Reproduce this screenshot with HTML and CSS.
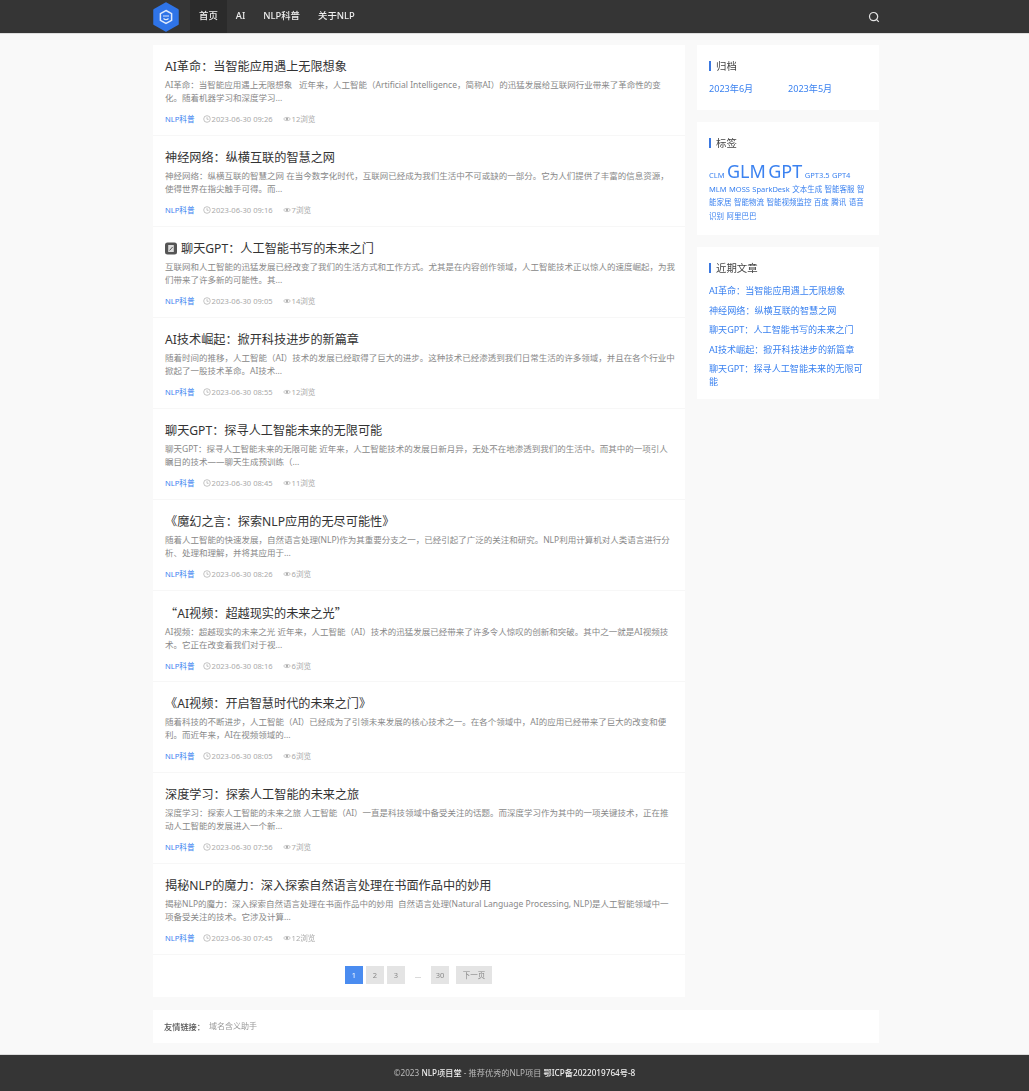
FILE: index.html
```html
<!DOCTYPE html>
<html lang="zh-CN">
<head>
  <meta charset="UTF-8" />
  <meta name="viewport" content="width=device-width, initial-scale=1.0"/>
  <title>NLP项目堂</title>
  <link rel="stylesheet" href="styles.css">
</head>
<body>

<!-- meta icons -->
<svg class="defs" width="0" height="0">
  <symbol id="i-clock" viewBox="0 0 8 8">
    <circle cx="4" cy="4" r="3.3" fill="none" stroke="currentColor" stroke-width=".7"/>
    <path d="M4 2.2 V4.3 H5.6" fill="none" stroke="currentColor" stroke-width=".7"/>
  </symbol>
  <symbol id="i-eye" viewBox="0 0 9 8">
    <path d="M.5 4 C2 1.6 7 1.6 8.5 4 C7 6.4 2 6.4 .5 4 Z" fill="none" stroke="currentColor" stroke-width=".7"/>
    <circle cx="4.5" cy="4" r="1.3" fill="currentColor"/>
  </symbol>
</svg>

<header class="top-bar">
  <div class="wrap top-inner">
    <a href="#" class="logo">
      <svg width="26" height="30" viewBox="0 0 26 30">
        <path d="M13 1.5 L24.5 8 V22 L13 28.5 L1.5 22 V8 Z" fill="#2f74e8" stroke="#2f74e8" stroke-width="2.5" stroke-linejoin="round"/>
        <path d="M13 8.5 L18.6 11.7 V18.3 L13 21.5 L7.4 18.3 V11.7 Z" fill="none" stroke="#dfeafc" stroke-width="1.5"/>
        <path d="M10 14 H16 M10.5 16.5 Q13 18.6 15.5 16.5" fill="none" stroke="#dfeafc" stroke-width="1.2"/>
      </svg>
    </a>
    <nav class="nav">
      <a href="#" class="active">首页</a>
      <a href="#">AI</a>
      <a href="#">NLP科普</a>
      <a href="#">关于NLP</a>
    </nav>
    <svg class="search" width="12" height="12" viewBox="0 0 12 12">
      <circle cx="5.6" cy="5.6" r="4.1" fill="none" stroke="#e4e4e4" stroke-width="1.2"/>
      <path d="M8.6 8.6 L10.8 10.8" stroke="#e4e4e4" stroke-width="1.2"/>
    </svg>
  </div>
</header>

<div class="wrap page">
  <main class="main-col">
    <article class="post">
      <h2>AI革命：当智能应用遇上无限想象</h2>
      <p>AI革命：当智能应用遇上无限想象&nbsp;&nbsp; 近年来，人工智能（Artificial Intelligence，简称AI）的迅猛发展给互联网行业带来了革命性的变化。随着机器学习和深度学习...</p>
      <div class="meta"><a href="#">NLP科普</a><span><svg><use href="#i-clock"/></svg>2023-06-30 09:26</span><span><svg><use href="#i-eye"/></svg>12浏览</span></div>
    </article>
    <article class="post">
      <h2>神经网络：纵横互联的智慧之网</h2>
      <p>神经网络：纵横互联的智慧之网 在当今数字化时代，互联网已经成为我们生活中不可或缺的一部分。它为人们提供了丰富的信息资源，使得世界在指尖触手可得。而...</p>
      <div class="meta"><a href="#">NLP科普</a><span><svg><use href="#i-clock"/></svg>2023-06-30 09:16</span><span><svg><use href="#i-eye"/></svg>7浏览</span></div>
    </article>
    <article class="post">
      <h2><svg class="title-icon" width="12" height="13" viewBox="0 0 12 13">
          <rect x="0" y="0.5" width="12" height="12" rx="2.5" fill="#555"/>
          <path d="M3.2 3 H8.8 V10 H3.2 Z" fill="#ddd"/>
          <path d="M4.6 8.4 L7.6 5" stroke="#555" stroke-width="1"/>
        </svg>聊天GPT：人工智能书写的未来之门</h2>
      <p>互联网和人工智能的迅猛发展已经改变了我们的生活方式和工作方式。尤其是在内容创作领域，人工智能技术正以惊人的速度崛起，为我们带来了许多新的可能性。其...</p>
      <div class="meta"><a href="#">NLP科普</a><span><svg><use href="#i-clock"/></svg>2023-06-30 09:05</span><span><svg><use href="#i-eye"/></svg>14浏览</span></div>
    </article>
    <article class="post">
      <h2>AI技术崛起：掀开科技进步的新篇章</h2>
      <p>随着时间的推移，人工智能（AI）技术的发展已经取得了巨大的进步。这种技术已经渗透到我们日常生活的许多领域，并且在各个行业中掀起了一股技术革命。AI技术...</p>
      <div class="meta"><a href="#">NLP科普</a><span><svg><use href="#i-clock"/></svg>2023-06-30 08:55</span><span><svg><use href="#i-eye"/></svg>12浏览</span></div>
    </article>
    <article class="post">
      <h2>聊天GPT：探寻人工智能未来的无限可能</h2>
      <p>聊天GPT：探寻人工智能未来的无限可能 近年来，人工智能技术的发展日新月异，无处不在地渗透到我们的生活中。而其中的一项引人瞩目的技术——聊天生成预训练（...</p>
      <div class="meta"><a href="#">NLP科普</a><span><svg><use href="#i-clock"/></svg>2023-06-30 08:45</span><span><svg><use href="#i-eye"/></svg>11浏览</span></div>
    </article>
    <article class="post">
      <h2>《魔幻之言：探索NLP应用的无尽可能性》</h2>
      <p>随着人工智能的快速发展，自然语言处理(NLP)作为其重要分支之一，已经引起了广泛的关注和研究。NLP利用计算机对人类语言进行分析、处理和理解，并将其应用于...</p>
      <div class="meta"><a href="#">NLP科普</a><span><svg><use href="#i-clock"/></svg>2023-06-30 08:26</span><span><svg><use href="#i-eye"/></svg>6浏览</span></div>
    </article>
    <article class="post">
      <h2><span class="cjk-quote">“</span>AI视频：超越现实的未来之光<span class="cjk-quote">”</span></h2>
      <p>AI视频：超越现实的未来之光 近年来，人工智能（AI）技术的迅猛发展已经带来了许多令人惊叹的创新和突破。其中之一就是AI视频技术。它正在改变着我们对于视...</p>
      <div class="meta"><a href="#">NLP科普</a><span><svg><use href="#i-clock"/></svg>2023-06-30 08:16</span><span><svg><use href="#i-eye"/></svg>6浏览</span></div>
    </article>
    <article class="post">
      <h2>《AI视频：开启智慧时代的未来之门》</h2>
      <p>随着科技的不断进步，人工智能（AI）已经成为了引领未来发展的核心技术之一。在各个领域中，AI的应用已经带来了巨大的改变和便利。而近年来，AI在视频领域的...</p>
      <div class="meta"><a href="#">NLP科普</a><span><svg><use href="#i-clock"/></svg>2023-06-30 08:05</span><span><svg><use href="#i-eye"/></svg>6浏览</span></div>
    </article>
    <article class="post">
      <h2>深度学习：探索人工智能的未来之旅</h2>
      <p>深度学习：探索人工智能的未来之旅 人工智能（AI）一直是科技领域中备受关注的话题。而深度学习作为其中的一项关键技术，正在推动人工智能的发展进入一个新...</p>
      <div class="meta"><a href="#">NLP科普</a><span><svg><use href="#i-clock"/></svg>2023-06-30 07:56</span><span><svg><use href="#i-eye"/></svg>7浏览</span></div>
    </article>
    <article class="post">
      <h2>揭秘NLP的魔力：深入探索自然语言处理在书面作品中的妙用</h2>
      <p>揭秘NLP的魔力：深入探索自然语言处理在书面作品中的妙用&nbsp; 自然语言处理(Natural Language Processing, NLP)是人工智能领域中一项备受关注的技术。它涉及计算...</p>
      <div class="meta"><a href="#">NLP科普</a><span><svg><use href="#i-clock"/></svg>2023-06-30 07:45</span><span><svg><use href="#i-eye"/></svg>12浏览</span></div>
    </article>

    <div class="pager">
      <a href="#" class="num current">1</a>
      <a href="#" class="num">2</a>
      <a href="#" class="num">3</a>
      <span class="dots">...</span>
      <a href="#" class="num">30</a>
      <a href="#" class="next">下一页</a>
    </div>
  </main>

  <aside class="side-col">
    <section class="widget">
      <h3>归档</h3>
      <div class="archive">
        <a href="#">2023年6月</a>
        <a href="#">2023年5月</a>
      </div>
    </section>
    <section class="widget">
      <h3>标签</h3>
      <div class="tags">
        <a href="#">CLM</a> <a href="#" class="big">GLM</a> <a href="#" class="big">GPT</a> <a href="#">GPT3.5</a> <a href="#">GPT4</a> <a href="#">MLM</a> <a href="#">MOSS</a> <a href="#">SparkDesk</a> <a href="#">文本生成</a> <a href="#">智能客服</a> <a href="#">智能家居</a> <a href="#">智能物流</a> <a href="#">智能视频监控</a> <a href="#">百度</a> <a href="#">腾讯</a> <a href="#">语音识别</a> <a href="#">阿里巴巴</a>
      </div>
    </section>
    <section class="widget">
      <h3>近期文章</h3>
      <ul class="recent">
        <li><a href="#">AI革命：当智能应用遇上无限想象</a></li>
        <li><a href="#">神经网络：纵横互联的智慧之网</a></li>
        <li><a href="#">聊天GPT：人工智能书写的未来之门</a></li>
        <li><a href="#">AI技术崛起：掀开科技进步的新篇章</a></li>
        <li><a href="#">聊天GPT：探寻人工智能未来的无限可能</a></li>
      </ul>
    </section>
  </aside>

  <div class="friend-links">
    <b>友情链接：</b><a href="#">域名含义助手</a>
  </div>
</div>

<footer class="site-footer">
  ©2023 <b>NLP项目堂</b> - 推荐优秀的NLP项目 <b>鄂ICP备2022019764号-8</b>
</footer>

</body>
</html>
```

FILE: styles.css
```css
* {
  box-sizing: border-box;
}

body {
  margin: 0;
  font-family: "Noto Sans", "Noto Sans CJK SC", sans-serif;
  background-color: #f9f9f9;
  color: #333;
  filter: blur(0.4px);
}

a {
  text-decoration: none;
  color: inherit;
}

.defs {
  position: absolute;
}

.wrap {
  width: 726px;
  margin: 0 150px 0 153px;
}

.top-bar {
  height: 34px;
  background-color: #353535;
  border-bottom: 1px solid #ddd;
}

.top-inner {
  height: 33px;
  display: flex;
  align-items: center;
}

.logo {
  display: flex;
  margin-right: 11px;
}

.nav {
  display: flex;
  height: 33px;
}

.nav a {
  padding: 0 9px;
  line-height: 32px;
  font-size: 9.4px;
  font-weight: 500;
  color: #eee;
}

.nav a.active {
  background-color: #2b2b2b;
}

.search {
  margin-left: auto;
  margin-right: -1px;
}

.page {
  display: grid;
  grid-template-columns: 532px 182px;
  column-gap: 12px;
  align-items: start;
  padding-top: 11px;
}

.main-col {
  background: #fff;
}

.post {
  height: 91px;
  padding: 12.5px 9.5px 0 12px;
  border-bottom: 1px solid #f7f7f7;
}

.post h2 {
  margin: 0;
  font-size: 12.15px;
  line-height: 18px;
  font-weight: 400;
  color: #333;
}

.title-icon {
  margin-right: 4px;
  vertical-align: -2px;
}

.cjk-quote {
  font-family: "Noto Sans CJK SC", sans-serif;
}

.post p {
  margin: 2.5px 0 0;
  font-size: 8.5px;
  line-height: 13px;
  color: #888;
}

.meta {
  margin-top: 8.5px;
  display: flex;
  gap: 8px;
  font-size: 7.6px;
  line-height: 12px;
  color: #aaa;
}

.meta a {
  color: #3b82f0;
}

.meta span {
  display: flex;
  align-items: center;
}

.meta span + span {
  margin-left: 2px;
}

.meta svg {
  width: 8px;
  height: 8px;
  margin-right: 1px;
}

.pager {
  height: 42px;
  padding: 11px 1px 0 0;
  display: flex;
  justify-content: center;
  gap: 3px;
  font-size: 7.5px;
}

.pager a {
  height: 18px;
  line-height: 18px;
  text-align: center;
  background-color: #e4e4e4;
  color: #888;
}

.pager .num {
  width: 18px;
}

.pager .next {
  width: 36px;
  margin-left: 4px;
}

.pager .current {
  background-color: #4a8cf0;
  color: #fff;
}

.pager .dots {
  width: 20px;
  line-height: 18px;
  text-align: center;
  color: #aaa;
}

.side-col {
  display: flex;
  flex-direction: column;
  gap: 12px;
}

.widget {
  background: #fff;
  padding: 16px 12px 12px;
}

.widget h3 {
  margin: 0;
  padding-left: 5px;
  border-left: 2.5px solid #3b78e0;
  font-size: 10.4px;
  line-height: 10px;
  font-weight: 400;
  color: #444;
}

.archive {
  margin-top: 11px;
  margin-bottom: 2px;
  display: grid;
  grid-template-columns: 79px 79px;
  font-size: 9.1px;
  line-height: 14px;
  color: #3b82f0;
}

.tags {
  margin-top: 12px;
  font-size: 7.5px;
  line-height: 13.5px;
  color: #3b82f0;
}

.tags a {
  margin-right: 0.5px;
}

.tags .big {
  font-size: 18px;
  line-height: 22px;
}

.recent {
  margin: 11px 0 -1px;
  padding: 0;
  list-style: none;
  display: flex;
  flex-direction: column;
  gap: 6.5px;
  font-size: 9.1px;
  line-height: 13px;
  color: #3b82f0;
}

.friend-links {
  grid-column: 1 / -1;
  height: 33px;
  margin-top: 13px;
  padding: 0 11px 2px;
  display: flex;
  align-items: center;
  background: #fff;
  font-size: 8px;
  color: #999;
}

.friend-links b {
  width: 45px;
  font-size: 8.2px;
  font-weight: 500;
  color: #555;
}

.site-footer {
  height: 37px;
  margin-top: 11px;
  border-top: 1px solid #ddd;
  background-color: #353535;
  text-align: center;
  font-size: 8.2px;
  line-height: 36px;
  color: #bbb;
}

.site-footer b {
  font-weight: 500;
  color: #eee;
}
```
